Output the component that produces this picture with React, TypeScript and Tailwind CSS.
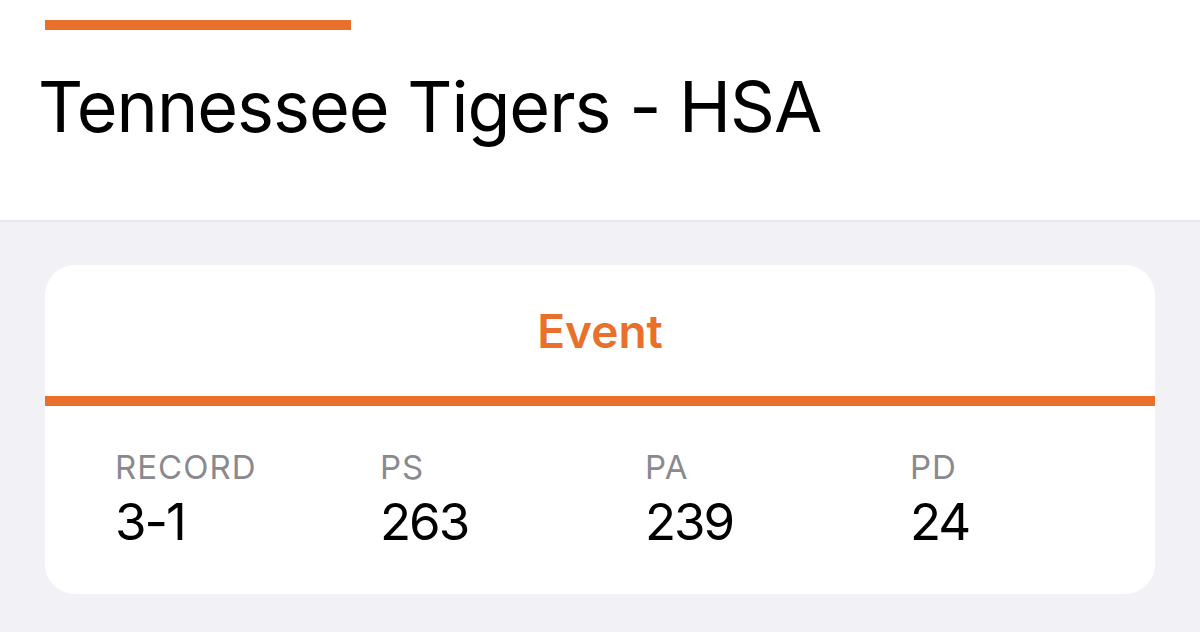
export default function App() {
  const stats = [
    { label: "RECORD", value: "3-1" },
    { label: "PS", value: "263" },
    { label: "PA", value: "239" },
    { label: "PD", value: "24" },
  ];

  return (
    <div className="w-[1200px] h-[632px] overflow-hidden bg-[#f2f2f6] font-['Inter',sans-serif]">
      <header className="h-[222px] bg-white border-b-2 border-[#e6e6ea] pt-[20px]">
        <div className="ml-[45px] w-[306px] h-[10px] bg-[#e8702a]" />
        <h1 className="mt-[42px] ml-[38px] text-[70px] leading-[70px] font-normal text-black tracking-[-1px]">
          Tennessee Tigers - HSA
        </h1>
      </header>

      <div className="pt-[43px] px-[45px]">
        <div className="h-[329px] bg-white rounded-[30px] overflow-hidden">
          <div className="h-[131px] flex items-center justify-center">
            <span className="text-[46px] leading-none font-semibold text-[#e8702a]">Event</span>
          </div>
          <div className="h-[10px] bg-[#e8702a]" />
          <div className="grid grid-cols-[265px_265px_265px_265px] pl-[70px] pt-[41px]">
            {stats.map((s) => (
              <div key={s.label}>
                <div className="text-[33px] leading-[40px] tracking-[1px] text-[#8a8a8e]">{s.label}</div>
                <div className="mt-[5px] text-[51px] leading-[60px] tracking-[-2px] text-black">{s.value}</div>
              </div>
            ))}
          </div>
        </div>
      </div>
    </div>
  );
}
